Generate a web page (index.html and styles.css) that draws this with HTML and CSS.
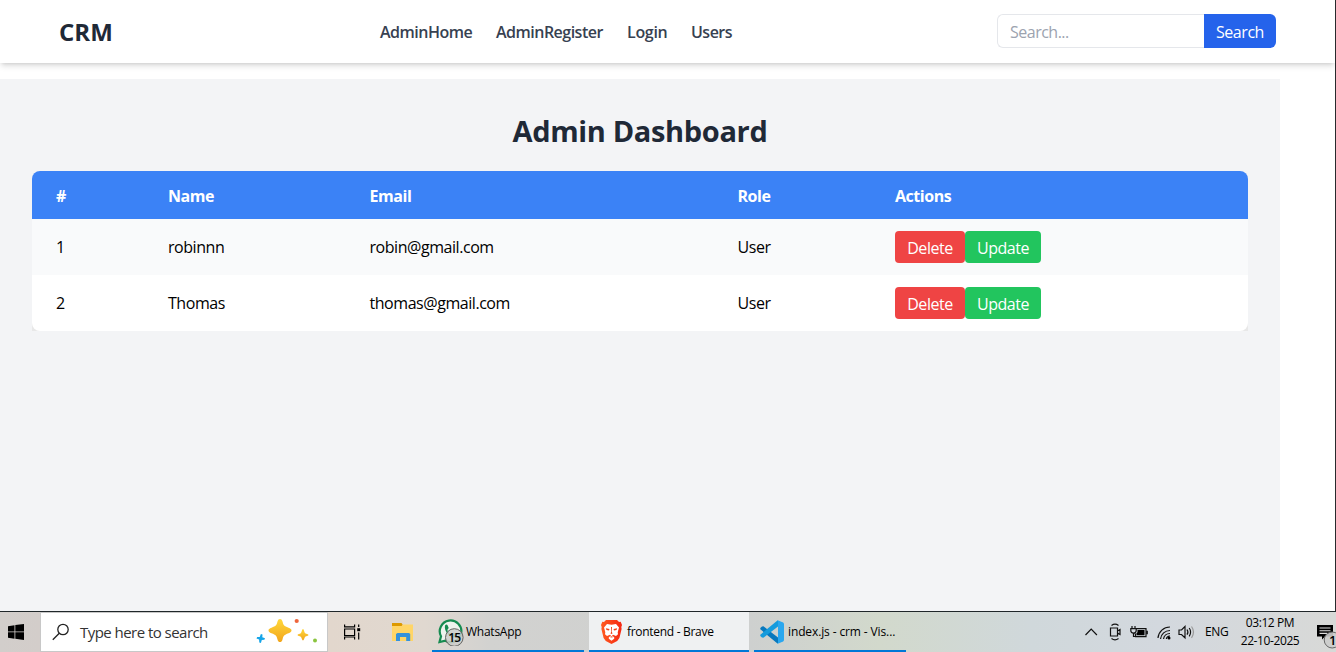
FILE: index.html
```html
<!DOCTYPE html>
<html lang="en">
<head>
<meta charset="utf-8">
<title>frontend</title>
<link rel="stylesheet" href="styles.css">
</head>
<body>
<div class="window">
  <header class="navbar">
    <div class="brand"><span>CRM</span></div>
    <nav class="links"><a class="l1">AdminHome</a><a class="l2">AdminRegister</a><a class="l3">Login</a><a class="l4">Users</a></nav>
    <form class="search"><div class="field">Search...</div><button type="button">Search</button></form>
  </header>
  <main class="dashboard">
    <h1>Admin Dashboard</h1>
    <div class="table-shell">
      <table class="users">
        <colgroup><col class="c-id"><col class="c-name"><col class="c-email"><col class="c-role"><col></colgroup>
        <thead><tr><th>#</th><th>Name</th><th>Email</th><th>Role</th><th>Actions</th></tr></thead>
        <tbody>
          <tr><td>1</td><td>robinnn</td><td>robin@gmail.com</td><td>User</td><td><div class="actions"><button class="delete">Delete</button><button class="update">Update</button></div></td></tr>
          <tr><td>2</td><td>Thomas</td><td>thomas@gmail.com</td><td>User</td><td><div class="actions"><button class="delete">Delete</button><button class="update">Update</button></div></td></tr>
        </tbody>
      </table>
    </div>
  </main>
</div>
<footer class="taskbar">
  <div class="start"><svg width="16" height="16" viewBox="0 0 16 16"><path d="M0 2.2 6.5 1.2V7.5H0ZM7.3 1.1 16 0V7.5H7.3ZM0 8.3H6.5V14.7L0 13.8ZM7.3 8.3H16V16L7.3 14.8Z"/></svg></div>
  <div class="tasksearch">
    <svg width="18" height="18" viewBox="0 0 18 18" fill="none" stroke="#222" stroke-width="1.3"><circle cx="11" cy="6.5" r="5.2"/><path d="M7.3 10.3.8 16.8"/></svg>
    <span>Type here to search</span>
    <svg class="sparkles" width="62" height="28" viewBox="0 0 62 28"><defs><linearGradient id="gold" x2="0" y2="1"><stop stop-color="#ffd83b"/><stop offset="1" stop-color="#f2a51b"/></linearGradient></defs><path fill="url(#gold)" d="M24 1c1.2 0 2 .8 2.5 2.6 1 3.900 1.500 4.500 6 6.200C34.400 10.500 35.500 11.200 35.500 12.500S34.400 14.500 32.500 15.200c-4.500 1.700-5 2.300-6 6.200C26 23.200 25.200 24 24 24s-2-.8-2.500-2.600c-1-3.900-1.500-4.500-6-6.200C13.600 14.500 12.500 13.800 12.500 12.500s1.100-2 3-2.700c4.500-1.700 5-2.300 6-6.200C22 1.800 22.800 1 24 1Z"/><path fill="url(#gold)" d="M47 11c1 0 1.200 3.400 2.200 4.300s3.300.8 3.300 1.700-2.400 1-3.300 1.800S48 22.500 47 22.500s-1.200-2.900-2.200-3.700-3.300-.9-3.300-1.800 2.400-.8 3.300-1.700S46 11 47 11Z"/><path fill="#16a5e8" d="m6.500 16.500-.2 2.800 2.700.9-.6 1.600-2.600.2-.9 2.900-1.600-.5-.2-2.800-2.600-1.200.7-1.500 2.500.1 1.200-2.900Z"/><circle cx="40.700" cy="3" r="2.100" fill="#ee653b"/><circle cx="59" cy="22.500" r="2" fill="#8ac43f"/></svg>
  </div>
  <div class="taskview"><svg width="17" height="16" viewBox="0 0 17 16" fill="none" stroke="#000" stroke-width="1.200"><path d="M.6.5V3.600M10.600.5V3.600M.6 2.800H10.600M.6 5H10.600V11.500H.6ZM.6 15.500V13H10.600V15.500M14.700.5V3M14.700 8.500V15.500"/><path fill="#000" stroke="none" d="M13.200 4.200h3v3h-3z"/></svg></div>
  <div class="explorer"><svg width="22" height="18" viewBox="0 0 22 18"><path fill="#dd9900" d="M0 0h9.500l1 1.500V4H0Z"/><path fill="#ffd567" d="M0 3h9.500l1.500-1.500H21V18H0Z"/><path fill="#3492dc" d="M5.500 10h11.500l1.200 1v7h-4v-4H8v4H4v-7Z"/></svg></div>
  <div class="task whatsapp"><svg width="27" height="28" viewBox="0 0 27 28"><path fill="#eef3ed" stroke="#168b50" stroke-width="2.200" d="M1.500 24 3 18.300A10.800 10.800 0 1 1 7.300 22.700Z"/><path fill="#168b50" d="M7 7.500c1-1.500 2.200-1 2.700 0l1 2.500-1.400 1.900c1 2.100 2.900 3.600 4.800 4.600l1.700-1.700 3 1.500c0 2.300-2 3.500-4 3.100C10.500 18 6 13 7 7.500Z"/><circle cx="16.300" cy="19.500" r="8.800" fill="#ccccca" fill-opacity=".85" stroke="#62625f"/><text x="10.300" y="24" class="badge">15</text></svg><span>WhatsApp</span></div>
  <div class="task brave"><svg width="21" height="24" viewBox="0 0 21 24"><defs><linearGradient id="orange" x2="1"><stop stop-color="#ff5b20"/><stop offset="1" stop-color="#f52712"/></linearGradient></defs><path fill="url(#orange)" d="M5 0h11l2 2 1.700-.2L21 5l-.7 2 .3 2-2.200 9-2.200 3-5.700 3-5.700-3-2.200-3L.4 9 .7 7 0 5 1.300 1.800 3 2Z"/><path fill="#fff" d="m6 4 4.500.8L15 4l3 3.500-1.300 4.700.3 2-2 1.800-3-1.300-1 .8 2.200 1.700v1.500l-2.700 2.100-2.700-2.100v-1.500L10 15.500l-1-.8L6 16l-2-1.800.3-2L3 7.500Z"/><path fill="#f24119" d="m4.800 8.300 3.700.8-.5 1.500-2.500-.5ZM16.200 8.300l-3.700.8.500 1.500 2.500-.5ZM10 7h1l-.2 4.700.7 1.700-1 .6-1-.6.7-1.700ZM8.500 17l2-.8 2 .8-2 .5Z"/></svg><span>frontend - Brave</span></div>
  <div class="task vscode"><svg width="24" height="24" viewBox="0 0 24 24"><path fill="#0878bd" d="M.3 8 2 6.400l1.400-.1L18 17.500v6L16.800 23 .3 9.300Z"/><path fill="#159bdd" d="m.3 16 1.700 1.600 1.400.1L18 6.500v-6L16.800 1 .3 14.700Z"/><path fill="#2aa7ef" d="m17 0 6.200 2.600.8 1.200v16.400l-.8 1.200L17 24l1-1.500v-21Z"/></svg><span>index.js - crm - Vis...</span></div>
  <div class="tray">
    <svg width="110" height="20" viewBox="0 0 110 20" fill="none" stroke="#111" stroke-width="1.200"><path d="m.5 13 5.700-6 5.700 6"/><path d="M25.500 6h7v8h-7zM32.500 9l2.500-1.500v5L32.500 11M26.500 3.500c2-1.500 5-1.500 7 0M26.500 16.500c2 1.500 5 1.500 7 0"/><path d="M47 4v3M50 4v3M45.800 6.600h5.400v2c0 1.700-1 2.500-2.700 2.500s-2.700-.8-2.700-2.500ZM48.500 11v3.500h3M51.500 6.600h9.500v8H50.500v-3"/><path fill="#000" stroke="none" d="M52.500 8h7v5.200h-8v-2l1-1zM61.300 8.800h1.500v3.500h-1.500z"/><path d="M73 16A12 12 0 0 1 85 5M75.500 17A9.500 9.500 0 0 1 85 8.500M78.500 17A6.500 6.500 0 0 1 85 11.500M81.300 17A3.600 3.600 0 0 1 85 14"/><circle cx="84" cy="16" r="1.500" fill="#000" stroke="none"/><path d="M94 8h2.500L100 4.500v11.300L96.500 12.500H94ZM102 7.500q1.800 2.600 0 5.200M104.200 6q2.800 4 0 8.300"/><path stroke="#999" d="M106.500 4.500q4 5.500 0 11.300"/></svg>
    <span class="language">ENG</span>
    <div class="clock"><span class="time">03:12 PM</span><span class="date">22-10-2025</span></div>
    <svg class="notice" width="20" height="28" viewBox="0 0 20 28"><path d="M1 1h16v11.500H9l-3 3v-3H1Z"/><path stroke="#ddd" stroke-width="1.100" d="M3.500 4h11M3.500 6.700h11M3.500 9.400h8"/><circle cx="16.200" cy="16" r="8" fill="#ccc" fill-opacity=".9" stroke="#666"/><text class="count" x="13" y="21">1</text></svg>
  </div>
</footer>
</body>
</html>
```
FILE: styles.css
```css
* { box-sizing: border-box; }
body { margin: 0; width: 1336px; height: 652px; overflow: hidden; display: flex; flex-direction: column; background: #fff; color: #000; font: 16px/24px "Open Sans", "Noto Sans", sans-serif; }
.window { height: 611px; flex: none; border-right: 1px solid #292a2d; overflow: hidden; display: flex; flex-direction: column; }
.navbar { height: 63px; flex: none; margin-bottom: 16px; padding: 0 59px 1px; display: flex; align-items: center; background: #fff; box-shadow: 0 4px 6px -1px rgba(0,0,0,.13), 0 2px 4px -2px rgba(0,0,0,.13); }
.brand { width: 321px; padding-top: 2px; color: #1f2937; font-size: 24px; font-weight: 700; line-height: 32px; letter-spacing: 0; }
.links { display: flex; gap: 24px; padding-top: 1px; color: #374151; font-weight: 600; white-space: nowrap; letter-spacing: -.51px; }
.l1 { width: 92px; } .l2 { width: 107px; } .l3 { width: 40px; letter-spacing: -.3px; } .l4 { width: 40px; }
.search { margin-left: auto; display: flex; width: 279px; height: 34px; }
.field { flex: 1; border: 1px solid #e5e7eb; border-right: 0; border-radius: 6px 0 0 6px; padding: 5px 12px 3px; color: #9ca3af; letter-spacing: -.5px; }
button { border: 0; padding: 1px 0 0; color: #fff; font: inherit; letter-spacing: -.45px; }
.search button { width: 72px; background: #2563eb; border-radius: 0 6px 6px 0; }
.dashboard { width: 1280px; flex: 1; padding: 34px 32px 32px; background: #f3f4f6; }
h1 { margin: 0 0 22px; color: #1f2937; text-align: center; font-size: 29px; font-weight: 700; line-height: 36px; letter-spacing: -.35px; white-space: nowrap; }
.table-shell { background: #e8e8e8; border-radius: 8px 8px 0 0; }
.users { width: 1216px; table-layout: fixed; border-collapse: collapse; border-radius: 8px; overflow: hidden; background: #fff; letter-spacing: -.45px; }
.c-id { width: 112px; } .c-name { width: 201.5px; } .c-email { width: 368px; } .c-role { width: 157.5px; }
th, td { padding: 13px 24px 11px; text-align: left; white-space: nowrap; }
th { background: #3b82f6; color: #fff; font-weight: 700; }
td { height: 56px; padding: 12px 24px; }
tbody tr:first-child { background: #f9fafb; }
.actions { display: flex; }
.actions button { height: 32px; border-radius: 4px; }
.delete { width: 70px; background: #ef4444; } .update { width: 76px; background: #22c55e; }
.taskbar { height: 41px; flex: none; border-top: 1px solid #20272a; display: flex; background: linear-gradient(90deg,#d2cecb 0,#d3cdca 40px,#e2d7cd 330px,#e0d8d0 425px,#d2d2d0 490px,#ced0cf 750px,#d2d9cc 880px,#d0d8db 1030px,#d3d8de 1160px,#d8d9d7 1336px); font-size: 12px; line-height: 16px; }
.start { width: 40px; padding: 12px 8px; }
.tasksearch { width: 288px; display: flex; align-items: center; padding-left: 11px; background: #fff; border: 1px solid #c8c8c8; color: #333; font-size: 15px; }
.tasksearch span { width: 128px; margin-left: 10px; white-space: nowrap; letter-spacing: -.54px; }
.sparkles { margin-left: 48px; }
.taskview { width: 64px; padding: 12px 16px; }
.explorer { width: 40px; padding: 11px 0; }
.task { display: flex; align-items: center; height: 40px; padding-top: 2px; border-bottom: 2px solid #0078d7; white-space: nowrap; }
.whatsapp { width: 152px; margin-right: 5px; padding-left: 6px; }
.whatsapp span { margin-left: 1px; letter-spacing: -.25px; }
.brave { width: 160px; margin-right: 5px; padding-left: 12px; background: #eff1f2; }
.brave span { margin-left: 5px; letter-spacing: -.3px; }
.vscode { width: 152px; padding-left: 6px; }
.vscode span { margin-left: 4px; letter-spacing: -.12px; }
.tray { margin-left: auto; width: 251px; display: flex; align-items: center; }
.language { width: 24px; margin-left: 10px; letter-spacing: -.4px; }
.clock { width: 60px; margin-left: 11px; display: flex; flex-direction: column; align-items: center; line-height: 18px; white-space: nowrap; letter-spacing: -.4px; }
.notice { margin-left: 16px; margin-top: 11px; }
.badge { font: 600 12px "Open Sans", sans-serif; letter-spacing: -1px; }
.count { font: 600 13px "Open Sans", sans-serif; }
```
